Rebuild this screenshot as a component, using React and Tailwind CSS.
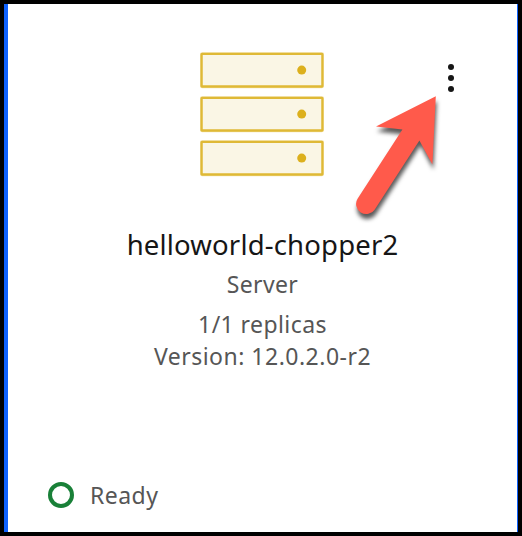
function ServerIcon() {
  return (
    <svg className="mr-0.5" width="124" height="126" viewBox="0 0 124 126" aria-hidden="true">
      {[1.9, 45.9, 89.9].map((y) => (
        <g key={y}>
          <rect x="1.6" y={y} width="120.8" height="32.6" rx="0.5" fill="#faf6e5" stroke="#e9cb62" strokeWidth="3.4" className="opacity-50" />
          <rect x="1.6" y={y} width="120.8" height="32.6" rx="0.5" fill="#faf6e5" stroke="#dfb936" strokeWidth="2.3" />
          <circle cx="101.7" cy={y + 16.2} r="4.5" fill="#dcb01d" />
        </g>
      ))}
    </svg>
  );
}

function OverflowMenu() {
  return (
    <button type="button" aria-label="Options" className="absolute left-[435px] top-[60px] flex h-8 w-4 flex-col items-center gap-[5px]">
      {[0, 1, 2].map((dot) => (
        <span key={dot} className="size-1.5 shrink-0 rounded-full bg-[#161616]" />
      ))}
    </button>
  );
}

function PointerArrow() {
  return (
    <svg className="absolute left-[332px] top-[76px] drop-shadow-[1px_5px_2px_rgba(0,0,0,0.65)]" width="120" height="160" viewBox="340 80 120 160" aria-hidden="true">
      <path d="M435.8 96.2 L376 126.6 L402.4 129.5 L357.7 198.4 A10.1 10.1 0 0 0 374.8 209.4 L419.4 140.6 L432.4 164.6 Z" fill="#ff5a4b" />
    </svg>
  );
}

export default function App() {
  return (
    <main className="h-[536px] w-[522px] border-4 border-black bg-white font-['Noto_Sans',sans-serif]">
      <article className="relative flex h-[528px] w-[514px] flex-col items-center border-l-4 border-r border-[#0f62fe] pt-[48px] text-[23px]/8 text-[#565656]">
        <ServerIcon />
        <OverflowMenu />
        <PointerArrow />
        <h1 className="mt-[49px] whitespace-nowrap text-[27.5px]/9 tracking-[0.17px] text-[#161616]">helloworld-chopper2</h1>
        <p className="mt-[5px] tracking-[0.35px]">Server</p>
        <p className="mt-2 tracking-[0.42px]">1/1 replicas</p>
        <p className="whitespace-nowrap tracking-[0.49px]">Version: 12.0.2.0-r2</p>
        <div className="mb-[21px] mt-auto flex h-8 items-center gap-4 self-start pl-10">
          <span className="size-[26px] rounded-full border-4 border-[#198038]" />
          <span className="tracking-[0.45px]">Ready</span>
        </div>
      </article>
    </main>
  );
}
